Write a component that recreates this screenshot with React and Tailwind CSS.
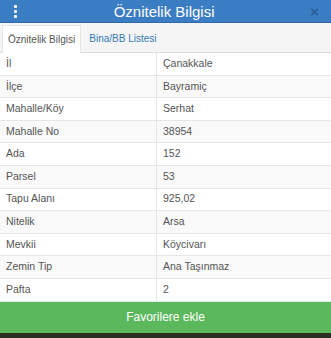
import React from "react";

const rows = [
  ["İl", "Çanakkale"],
  ["İlçe", "Bayramiç"],
  ["Mahalle/Köy", "Serhat"],
  ["Mahalle No", "38954"],
  ["Ada", "152"],
  ["Parsel", "53"],
  ["Tapu Alanı", "925,02"],
  ["Nitelik", "Arsa"],
  ["Mevkii", "Köycivarı"],
  ["Zemin Tip", "Ana Taşınmaz"],
  ["Pafta", "2"],
];

export default function App() {
  return (
    <div className="w-[331px] h-[338px] overflow-hidden bg-white flex flex-col" style={{ fontFamily: '"Liberation Sans", Arial, sans-serif' }}>
      <div className="h-[23px] bg-[#3b7dc2] border-b border-[#2f6aa8] flex items-center justify-between px-[12px] shrink-0">
        <div className="flex flex-col gap-[2px] w-[6px] items-center">
          <span className="w-[3px] h-[3px] bg-white rounded-[1px]" />
          <span className="w-[3px] h-[3px] bg-white rounded-[1px]" />
          <span className="w-[3px] h-[3px] bg-white rounded-[1px]" />
        </div>
        <div className="text-white text-[15px] leading-none">Öznitelik Bilgisi</div>
        <div className="text-[#2a5f99] text-[15px] font-bold leading-none">×</div>
      </div>
      <div className="h-[30px] bg-[#f5f5f5] border-b border-[#dddddd] flex items-end px-[2px] shrink-0">
        <div className="h-[28px] -mb-px bg-white border border-b-0 border-[#e5e5e5] px-[5px] flex items-center text-[10px] text-[#555]">Öznitelik Bilgisi</div>
        <div className="h-[28px] px-[8px] flex items-center text-[10px] text-[#337ab7]">Bina/BB Listesi</div>
      </div>
      <div className="flex flex-col shrink-0">
        {rows.map(([k, v], i) => (
          <div key={k} className={`h-[22.6px] flex items-center border-b border-[#e6e6e6] text-[10.5px] text-[#555] ${i % 2 === 1 ? "bg-[#f9f9f9]" : "bg-white"}`}>
            <div className="w-[157px] h-full flex items-center pl-[6px] border-r border-[#e6e6e6]">{k}</div>
            <div className="flex-1 pl-[6px]">{v}</div>
          </div>
        ))}
      </div>
      <div className="h-[31px] bg-[#5cb85c] flex items-center justify-center text-white text-[12px] shrink-0">Favorilere ekle</div>
      <div className="flex-1 bg-[#2a2e22]" />
    </div>
  );
}
